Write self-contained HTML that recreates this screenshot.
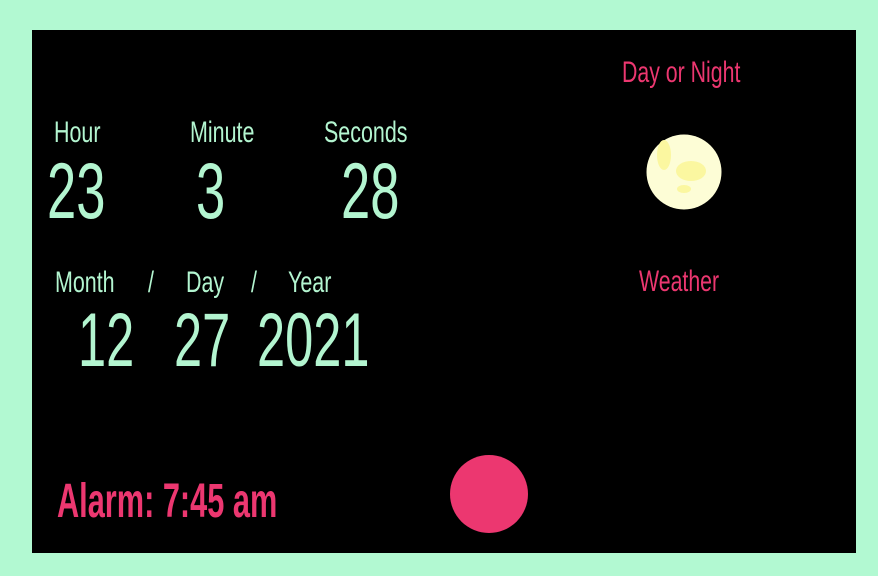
<!DOCTYPE html>
<html><head><meta charset="utf-8"><style>
html,body{margin:0;padding:0}
body{width:878px;height:576px;background:#b2f9d2;position:relative;overflow:hidden;font-family:"Liberation Sans",sans-serif}
#box{position:absolute;left:32px;top:30px;width:824px;height:523px;background:#000}
.t{position:absolute;line-height:1;white-space:nowrap;transform-origin:0 0;color:#b3f5d0}
.p{color:#ec3770}
.lab{font-size:30px;transform:scaleX(.715)}
.big{font-weight:300;transform:scaleX(.665)}
</style></head><body>
<div id="box"></div>
<span class="t lab" style="left:54px;top:118px">Hour</span>
<span class="t lab" style="left:190px;top:118px">Minute</span>
<span class="t lab" style="left:324px;top:118px">Seconds</span>
<span class="t big" style="left:47px;top:151px;font-size:79px">23</span>
<span class="t big" style="left:196px;top:151px;font-size:79px">3</span>
<span class="t big" style="left:341px;top:151px;font-size:79px">28</span>
<span class="t lab" style="left:55px;top:268px">Month</span>
<span class="t lab" style="left:148px;top:268px">/</span>
<span class="t lab" style="left:186px;top:268px">Day</span>
<span class="t lab" style="left:251px;top:268px">/</span>
<span class="t lab" style="left:288px;top:268px">Year</span>
<span class="t big" style="left:78px;top:303px;font-size:76px">12</span>
<span class="t big" style="left:174px;top:303px;font-size:76px">27</span>
<span class="t big" style="left:257px;top:303px;font-size:76px">2021</span>
<span class="t p" style="left:622px;top:58px;font-size:30px;transform:scaleX(.71)">Day or Night</span>
<span class="t p" style="left:639px;top:267px;font-size:30px;transform:scaleX(.71)">Weather</span>
<span class="t p" style="left:57px;top:478px;font-size:48px;font-weight:bold;transform:scaleX(.64)">Alarm: 7:45 am</span>
<svg style="position:absolute;left:0;top:0" width="878" height="576">
<circle cx="684" cy="172" r="37.5" fill="#fdfdd6"/>
<ellipse cx="664" cy="155" rx="7" ry="15" fill="#fbf7a0"/>
<ellipse cx="691" cy="171" rx="15" ry="10" fill="#fbf7a0"/>
<ellipse cx="684" cy="189" rx="7" ry="4" fill="#fbf7a0"/>
<circle cx="489" cy="494" r="39" fill="#ec3770"/>
</svg>
</body></html>
